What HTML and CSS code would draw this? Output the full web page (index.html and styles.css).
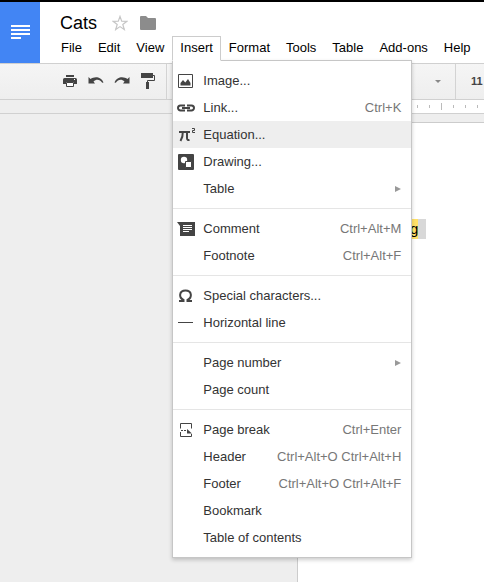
FILE: index.html
```html
<!DOCTYPE html>
<html lang="en">
<head>
<meta charset="utf-8">
<title>Cats</title>
<link rel="stylesheet" href="styles.css">
</head>
<body>
<header class="header">
  <a class="logo" href="#" aria-label="Docs home">
    <svg width="19" height="14" viewBox="0 0 19 14" fill="#fff"><path d="M0 0h19v2H0zM0 4h19v2H0zM0 8h19v2H0zM0 12h10v2H0z"/></svg>
  </a>
  <div class="heading">
    <div class="title-row">
      <h1 class="title">Cats</h1>
      <button class="plain" aria-label="Star"><svg width="16" height="16" viewBox="0 0 16 16" fill="none" stroke="#c6c6c6" stroke-width="1.2"><path d="M8 1.400l1.700 4.800 5.200.1-4.100 3.200 1.500 5L8 11.600l-4.300 2.900 1.500-5L1.100 6.300l5.200-.1z"/></svg></button>
      <button class="plain" aria-label="Move to folder"><svg width="16" height="14" viewBox="0 0 16 14" fill="#8c8c8c"><path d="M0 1q0-1 1-1h5l2 2h7q1 0 1 1v10q0 1-1 1H1q-1 0-1-1z"/></svg></button>
    </div>
    <nav class="menubar">
      <button class="menu-name">File</button>
      <button class="menu-name">Edit</button>
      <button class="menu-name">View</button>
      <div class="menu-anchor">
        <button class="menu-name open" aria-expanded="true">Insert</button>
        <div class="menu" role="menu">
          <button class="item" role="menuitem"><span class="icon"><svg width="16" height="16" viewBox="0 0 16 16"><path d="M.5 1.500h14v13H.5z" fill="#fff" stroke="#444"/><path d="M2.500 12.500V10L5 7l2.300 2.500L10 6l2.500 4v2.500z" fill="#444"/></svg></span><span class="label">Image...</span></button>
          <button class="item" role="menuitem"><span class="icon"><svg width="18" height="16" viewBox="0 0 18 16" fill="none" stroke="#444" stroke-width="2"><path d="M8 5.500H3.500a2.500 2.500 0 0 0 0 5H8M10 5.500h4.500a2.500 2.500 0 0 1 0 5H10M5 8h8"/></svg></span><span class="label">Link...</span><kbd>Ctrl+K</kbd></button>
          <button class="item active" role="menuitem"><span class="icon"><svg width="18" height="16" viewBox="0 0 18 16" fill="none" stroke="#444"><path d="M2 5h11" stroke-width="2"/><path d="M5.800 5Q6 10 3.500 14M10 5v6q0 2.500 2.500 2" stroke-width="2"/><path d="M15 1.500h2.500v2h-2v2H18" stroke-width="1"/></svg></span><span class="label">Equation...</span></button>
          <button class="item" role="menuitem"><span class="icon"><svg width="16" height="16" viewBox="0 0 16 16"><rect width="16" height="16" rx="1" fill="#444"/><circle cx="6" cy="6" r="3.200" fill="#fff"/><path d="M7.500 7.500h6v6h-6z" fill="#fff" stroke="#444"/></svg></span><span class="label">Drawing...</span></button>
          <button class="item" role="menuitem" aria-haspopup="true"><span class="icon"></span><span class="label">Table</span><span class="submenu-arrow"></span></button>
          <hr class="rule">
          <button class="item" role="menuitem"><span class="icon"><svg width="18" height="14" viewBox="0 0 18 14"><path d="M0 0h18v14H3V4z" fill="#444"/><path d="M6 3.500h9M6 5.500h9M6 7.500h9M6 9.500h6" stroke="#fff"/></svg></span><span class="label">Comment</span><kbd>Ctrl+Alt+M</kbd></button>
          <button class="item" role="menuitem"><span class="icon"></span><span class="label">Footnote</span><kbd>Ctrl+Alt+F</kbd></button>
          <hr class="rule">
          <button class="item" role="menuitem"><span class="icon"><svg width="16" height="14" viewBox="0 0 16 14" fill="none" stroke="#444" stroke-width="2"><path d="M1 12h4.500v-1.200C.5 8.500 1 1.500 7.500 1.500S14.500 8.500 9.500 10.800V12H14"/></svg></span><span class="label">Special characters...</span></button>
          <button class="item" role="menuitem"><span class="icon"><svg width="16" height="2" viewBox="0 0 16 2"><path d="M0 0h15v1H0z" fill="#444"/></svg></span><span class="label">Horizontal line</span></button>
          <hr class="rule">
          <button class="item" role="menuitem" aria-haspopup="true"><span class="icon"></span><span class="label">Page number</span><span class="submenu-arrow"></span></button>
          <button class="item" role="menuitem"><span class="icon"></span><span class="label">Page count</span></button>
          <hr class="rule">
          <button class="item" role="menuitem"><span class="icon"><svg width="14" height="14" viewBox="0 0 14 14" fill="none" stroke="#444"><path d="M1.500 5.500V.5h11v5M1.500 9v4.500h11V11"/><path d="M2 7.500h6" stroke-dasharray="2 1"/><path d="M8 6l5 4.500H8z" fill="#444" stroke="none"/></svg></span><span class="label">Page break</span><kbd>Ctrl+Enter</kbd></button>
          <button class="item" role="menuitem"><span class="icon"></span><span class="label">Header</span><kbd>Ctrl+Alt+O Ctrl+Alt+H</kbd></button>
          <button class="item" role="menuitem"><span class="icon"></span><span class="label">Footer</span><kbd>Ctrl+Alt+O Ctrl+Alt+F</kbd></button>
          <button class="item" role="menuitem"><span class="icon"></span><span class="label">Bookmark</span></button>
          <button class="item" role="menuitem"><span class="icon"></span><span class="label">Table of contents</span></button>
        </div>
      </div>
      <button class="menu-name">Format</button>
      <button class="menu-name">Tools</button>
      <button class="menu-name">Table</button>
      <button class="menu-name">Add-ons</button>
      <button class="menu-name">Help</button>
    </nav>
  </div>
</header>
<div class="toolbar" role="toolbar">
  <button class="tool" aria-label="Print"><svg width="14" height="14" viewBox="0 0 14 14"><path d="M3 1h8v2H3zM1.500 4h11Q14 4 14 5.500V10h-3V8H3v2H0V5.500Q0 4 1.500 4z" fill="#444"/><path d="M3.500 8.500h7v4h-7z" fill="#fff" stroke="#444"/><path d="M11 5h1v1h-1z" fill="#fff"/></svg></button>
  <button class="tool" aria-label="Undo"><svg width="16" height="14" viewBox="0 0 16 14"><path d="M.5 3l2 2C6 2.300 13 2 15.500 8.500l-1.300.3C12 5.500 8.500 4.800 5.500 7.500L7 9.500H.5z" fill="#444"/></svg></button>
  <button class="tool" aria-label="Redo"><svg width="16" height="14" viewBox="0 0 16 14"><path d="M15.500 3l-2 2C10 2.300 3 2 .5 8.500l1.300.3C4 5.500 7.500 4.800 10.500 7.500L9 9.500h6.500z" fill="#444"/></svg></button>
  <button class="tool" aria-label="Paint format"><svg width="14" height="16" viewBox="0 0 14 16"><path d="M0 0h12v5H0z" fill="#444"/><path d="M12 2.500h1.500v5h-7V10" fill="none" stroke="#444"/><path d="M5 9h3v7H5z" fill="#444"/></svg></button>
  <button class="picker" aria-label="Font"><svg width="6" height="3" viewBox="0 0 6 3"><path d="M0 0h6L3 3z" fill="#888"/></svg></button>
  <button class="size">11</button>
</div>
<div class="ruler"><div class="ruler-scale"></div></div>
<main class="canvas">
  <article class="page"><mark class="found">g</mark><span class="selected"></span></article>
</main>
</body>
</html>
```

FILE: styles.css
```css
* { box-sizing: border-box; }
body {
  margin: 0;
  min-height: 100vh;
  display: flex;
  flex-direction: column;
  overflow: hidden;
  font: 13px/17px "Liberation Sans", Arial, sans-serif;
  color: #000;
  background: #eee;
}
button {
  margin: 0;
  padding: 0;
  border: 0;
  background: none;
  font: inherit;
  color: inherit;
}
svg { display: block; flex: none; }
.header {
  display: flex;
  border-top: 2px solid #000;
  background: #fff;
}
.logo {
  display: flex;
  width: 40px;
  height: 61px;
  padding: 23px 0 0 11px;
  flex: none;
  background: #4285f4;
}
.heading { flex: 1; padding-left: 13px; }
.title-row {
  display: flex;
  align-items: center;
  height: 34px;
  padding: 7px 0 0 7px;
}
.title {
  margin: 0 15px 0 0;
  font-size: 18px;
  line-height: 26px;
  font-weight: normal;
}
.plain { margin-right: 12px; }
.menubar { display: flex; }
.menu-name {
  height: 25px;
  padding: 0 7px 2px;
  border: 1px solid transparent;
  white-space: nowrap;
}
.menu-anchor { position: relative; }
.menu-name.open {
  position: relative;
  z-index: 3;
  border-color: #ccc;
  border-bottom-color: #fff;
  background: #fff;
}
.menu {
  position: absolute;
  z-index: 2;
  top: 24px;
  left: 0;
  width: 240px;
  padding: 6px 0;
  border: 1px solid #c6c6c6;
  background: #fff;
  box-shadow: 0 2px 4px rgba(0, 0, 0, .2);
  color: #333;
}
.item {
  display: flex;
  align-items: center;
  width: 100%;
  height: 27px;
  padding: 0 10px 0 4px;
  text-align: left;
  white-space: nowrap;
}
.item.active { background: #eee; }
.icon {
  display: flex;
  justify-content: center;
  width: 18px;
  margin-right: 8px;
  flex: none;
}
.label { flex: 1; }
kbd { font: inherit; color: #777; }
.submenu-arrow {
  width: 6px;
  border-left: 6px solid #999;
  border-top: 3px solid transparent;
  border-bottom: 3px solid transparent;
}
.rule {
  height: 1px;
  margin: 6px 0;
  border: 0;
  background: #e5e5e5;
}
.toolbar {
  display: flex;
  align-items: center;
  height: 37px;
  padding-left: 57px;
  border-top: 1px solid #d0d0d0;
  border-bottom: 1px solid #d0d0d0;
  background: linear-gradient(#f5f5f5, #eee);
}
.tool {
  display: flex;
  align-items: center;
  justify-content: center;
  width: 26px;
  height: 26px;
  padding-bottom: 2px;
  flex: none;
}
.picker {
  display: flex;
  align-items: center;
  justify-content: flex-end;
  width: 290px;
  height: 35px;
  margin-left: 5px;
  padding-right: 14px;
  flex: none;
  border: solid #d3d3d3;
  border-width: 0 1px;
}
.size {
  padding-left: 15px;
  font-size: 11px;
  font-weight: bold;
  color: #444;
}
.ruler {
  height: 14px;
  padding-left: 394px;
  border-bottom: 1px solid #d0d0d0;
}
.ruler-scale {
  height: 13px;
  background:
    linear-gradient(#bbb, #bbb) 47px 3px / 1px 7px no-repeat,
    repeating-linear-gradient(90deg, transparent 0 11px, #bbb 11px 12px) 0 5px / 100% 3px no-repeat,
    #fff;
}
.canvas {
  display: flex;
  flex: 1;
  padding: 8px 0 0 297px;
}
.page {
  display: flex;
  align-items: flex-start;
  flex: 1;
  padding: 96px 0 0 112px;
  border: solid #ccc;
  border-width: 1px 0 0 1px;
  background: #fff;
}
.found {
  padding: 1px 0;
  background: #ffe168;
  font-size: 15px;
  line-height: 18px;
}
.selected { width: 8px; height: 20px; background: #d8d8d8; }
```
